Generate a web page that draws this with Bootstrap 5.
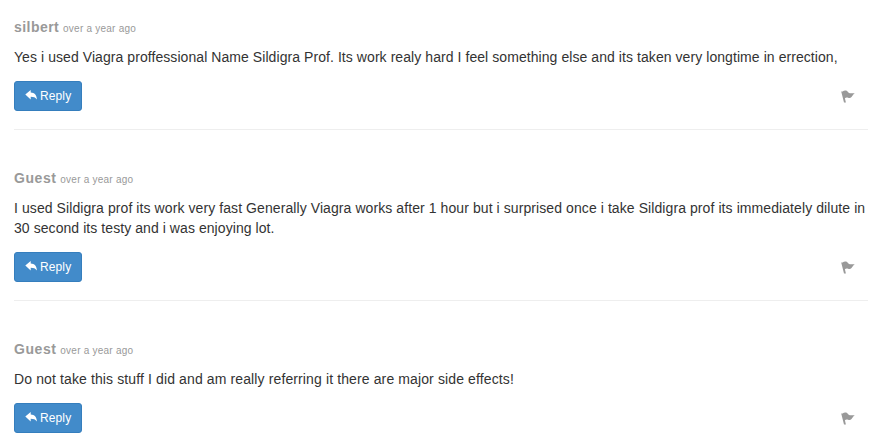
<!DOCTYPE html>
<html lang="en">
<head>
<meta charset="utf-8">
<meta name="viewport" content="width=device-width, initial-scale=1">
<title>Comments</title>
<link href="https://cdn.jsdelivr.net/npm/bootstrap@5.3.0/dist/css/bootstrap.min.css" rel="stylesheet">
<style>
body { font: 14px/20px "Liberation Sans", Arial, sans-serif; color: #333; background: #fff; overflow: hidden; }
.comments { padding: 17px 8px 0 14px; }
.comment { padding-bottom: 18px; margin-bottom: 38px; border-bottom: 1px solid #eee; }
.comment:last-child { border-bottom: 0; padding-bottom: 0; margin-bottom: 0; }
.comment-head { height: 20px; margin-bottom: 10px; color: #999; white-space: pre; }
.author { font-size: 14px; letter-spacing: .45px; }
.author-guest { letter-spacing: .55px; }
.when { font-size: 10px; letter-spacing: .23px; }
.comment-text { margin-bottom: 14px; white-space: nowrap; letter-spacing: .068px; }
.text-wide { letter-spacing: .083px; }
.text-wider { letter-spacing: .12px; }
.btn-reply { --bs-btn-color: #fff; --bs-btn-bg: #428bca; --bs-btn-border-color: #357ebd; --bs-btn-hover-color: #fff; --bs-btn-hover-bg: #3276b1; --bs-btn-hover-border-color: #285e8e;
  width: 68px; height: 30px; padding: 0 0 0 10px; font-size: 12px; line-height: 18px; border-radius: 3px; gap: 3px; }
.btn-reply svg { margin-bottom: 2px; }
.btn-reply span { letter-spacing: .12px; }
.flag { margin-right: 13px; color: #999; }
</style>
<script src="https://cdn.jsdelivr.net/npm/bootstrap@5.3.0/dist/js/bootstrap.bundle.min.js"></script>
</head>
<body>
<svg class="d-none">
  <symbol id="reply" viewBox="0 0 12 10"><path d="M5.700 0v2.500C9.500 2.600 11.600 5 12 9.600 10.300 7.400 8.700 6.700 5.700 6.700V9.400L.3 4.600z" fill="currentColor"/></symbol>
  <symbol id="flag" viewBox="0 0 14 13"><path d="M.2 1.500 1.600 1.600C2.800.3 4.700.1 6 .9c1.200.9 1.700 2.100 3 2.300 1.500.2 3.200-.1 4.800 0-1.500 1-2.200 2.500-3.300 3.900C9.500 8.300 8.200 8.200 7.100 7.800 5.900 7.300 4.700 7.500 3.900 8.200L4.900 12.600H3z" fill="currentColor"/></symbol>
</svg>
<main class="comments">
  <article class="comment">
    <div class="comment-head"><strong class="author">silbert</strong> <span class="when">over a year ago</span></div>
    <p class="comment-text">Yes i used Viagra proffessional Name Sildigra Prof. Its work realy hard I feel something else and its taken very longtime in errection,</p>
    <div class="d-flex justify-content-between align-items-center">
      <button class="btn btn-reply d-flex align-items-center" type="button"><svg width="12" height="10"><use href="#reply"/></svg><span>Reply</span></button>
      <svg class="flag" width="14" height="13"><use href="#flag"/></svg>
    </div>
  </article>
  <article class="comment">
    <div class="comment-head"><strong class="author author-guest">Guest</strong> <span class="when">over a year ago</span></div>
    <p class="comment-text"><span class="text-wide">I used Sildigra prof its work very fast Generally Viagra works after 1 hour but i surprised once i take Sildigra prof its immediately dilute in</span><br>30 second its testy and i was enjoying lot.</p>
    <div class="d-flex justify-content-between align-items-center">
      <button class="btn btn-reply d-flex align-items-center" type="button"><svg width="12" height="10"><use href="#reply"/></svg><span>Reply</span></button>
      <svg class="flag" width="14" height="13"><use href="#flag"/></svg>
    </div>
  </article>
  <article class="comment">
    <div class="comment-head"><strong class="author author-guest">Guest</strong> <span class="when">over a year ago</span></div>
    <p class="comment-text text-wider">Do not take this stuff I did and am really referring it there are major side effects!</p>
    <div class="d-flex justify-content-between align-items-center">
      <button class="btn btn-reply d-flex align-items-center" type="button"><svg width="12" height="10"><use href="#reply"/></svg><span>Reply</span></button>
      <svg class="flag" width="14" height="13"><use href="#flag"/></svg>
    </div>
  </article>
</main>
</body>
</html>
